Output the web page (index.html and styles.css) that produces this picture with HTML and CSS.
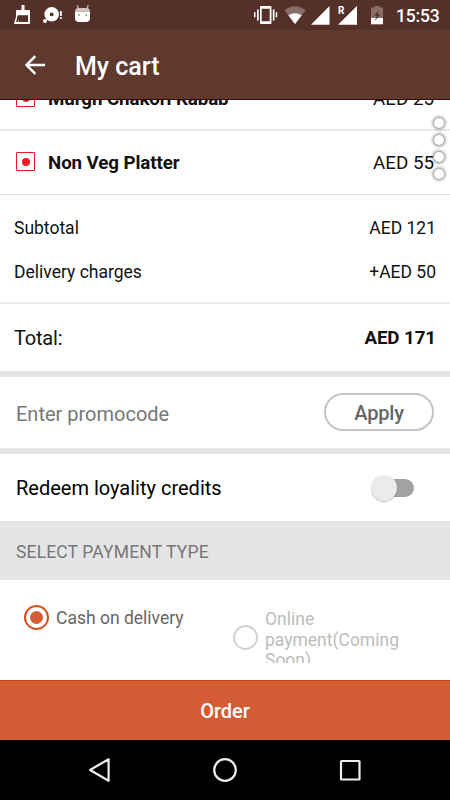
FILE: index.html
```html
<!DOCTYPE html>
<html lang="en">
<head>
<meta charset="utf-8">
<title>My cart</title>
<link rel="stylesheet" href="styles.css">
</head>
<body>
<div class="screen">
  <div class="status">
    <svg width="100" height="30" viewBox="0 0 100 30" fill="#fff">
      <path fill-rule="evenodd" d="M21.500 5h3v5h4.500a1 1 0 0 1 1 1v12a1 1 0 0 1-1 1H15.200a1 1 0 0 1-1-1.400L16 17v-6a1 1 0 0 1 1-1h4.500zM17.600 15.200 16.200 22h1.600l.7-2.200.3 2.200h9.300v-6.800z"/>
      <path fill-rule="evenodd" d="M51.700 7a7.300 7.300 0 1 1 0 14.600 7.300 7.300 0 0 1 0-14.600zm0 5.500a1.900 1.900 0 1 0 0 3.800 1.900 1.900 0 0 0 0-3.800z"/>
      <circle cx="45" cy="21" r="2"/>
      <path d="M60 11h1.800v5H60zM60 17.300h1.800v1.800H60z"/>
      <path d="M77.300 5.300l1 3M88.200 5.300l-1 3" stroke="#c5b8b4" stroke-width="1.300"/>
      <path d="M75 11.500h15v6.500q0 4-4 4h-7q-4 0-4-4z"/>
      <path d="M75 11.700q0-3.700 3.500-3.700h8q3.500 0 3.500 3.700z" fill="#cfc5c2"/>
      <circle cx="79" cy="15" r=".9" fill="#a08b85"/><circle cx="86.300" cy="15" r=".9" fill="#a08b85"/>
    </svg>
    <div class="status-right">
      <svg width="136" height="30" viewBox="250 0 136 30" fill="#fff">
        <path fill-rule="evenodd" d="M261 6h9.500a1 1 0 0 1 1 1v16a1 1 0 0 1-1 1H261a1 1 0 0 1-1-1V7a1 1 0 0 1 1-1zm.7 2.700v12.600h8V8.700z"/>
        <path d="M257 9.500h1.700v11H257zM254 12.300h1.500v5H254zM272.800 9.500h1.700v11h-1.700zM275.700 12.300h1.500v5h-1.500z"/>
        <path d="M284.500 10.300q10.500-8 21 0L295 24z" fill="#886e68"/>
        <path d="M288.300 15.300q6.700-4.300 13.400 0L295 24z"/>
        <path d="M329.500 6v18.700H311zM357 6v18.700h-19z"/>
        <path d="M374.500 6h5.500v1.500h3V18h-12V7.500h3.500z" fill="#886e68"/>
        <path d="M371 18h12v6.300h-12z"/>
        <path d="M378.500 10l-4.300 5.800h2.600l-2 5.200 5.500-6.800h-2.800l1-4.200z" fill="#553028"/>
      </svg>
      <span class="roam">R</span>
      <span class="clock">15:53</span>
    </div>
  </div>
  <header class="appbar">
    <svg class="back" width="20" height="20" viewBox="0 0 20 20" fill="none" stroke="#fff" stroke-width="2.400"><path d="M20 10H2M10.300 1.200 1.500 10l8.800 8.800"/></svg>
    <h1>My cart</h1>
  </header>
  <main>
    <div class="item first"><span class="mark"></span><b>Murgh Chakori Kabab</b><span class="price">AED 25</span></div>
    <div class="item"><span class="mark"></span><b>Non Veg Platter</b><span class="price">AED 55</span></div>
    <div class="sums">
      <div class="sum"><span>Subtotal</span><span>AED 121</span></div>
      <div class="sum"><span>Delivery charges</span><span>+AED 50</span></div>
    </div>
    <div class="total"><span>Total:</span><b>AED 171</b></div>
    <div class="promo"><span>Enter promocode</span><button>Apply</button></div>
    <div class="redeem"><span>Redeem loyality credits</span><span class="switch"><i></i></span></div>
    <h2>SELECT PAYMENT TYPE</h2>
    <div class="payments">
      <div class="option cash"><span class="radio on"></span><span class="label">Cash on delivery</span></div>
      <div class="option online"><span class="radio"></span><span>Online payment(Coming Soon)</span></div>
    </div>
    <div class="dots"><i></i><i></i><i></i><i></i></div>
  </main>
  <div class="order">Order</div>
  <nav>
    <svg width="24" height="26" viewBox="0 0 24 26"><path d="M20.600 2.200v21.600L2 13z"/></svg>
    <svg width="26" height="26" viewBox="0 0 26 26"><circle cx="13" cy="13" r="10.800"/></svg>
    <svg width="24" height="26" viewBox="0 0 24 26"><rect x="3" y="4" width="18.500" height="18.500" rx=".5"/></svg>
  </nav>
</div>
</body>
</html>
```
FILE: styles.css
```css
* { box-sizing: border-box; }
body { margin: 0; font-family: Roboto, "Liberation Sans", sans-serif; color: #111; background: #fff; }
.screen { width: 450px; height: 800px; display: flex; flex-direction: column; overflow: hidden; }
svg { display: block; flex: none; }
.status { height: 30px; flex: none; background: #553028; display: flex; justify-content: space-between; }
.status-right { position: relative; display: flex; align-items: center; padding-right: 10px; color: #fff; }
.roam { position: absolute; left: 88px; top: 6px; font-size: 10px; line-height: 10px; font-weight: 700; }
.clock { font-size: 17.5px; font-weight: 500; width: 44px; margin-left: 10px; line-height: 30px; padding-top: 2px; letter-spacing: -0.15px; white-space: nowrap; }
.appbar { height: 70px; flex: none; background: #5f382e; border-bottom: 1px solid #3b0805; display: flex; align-items: center; padding: 4px 0 0 25px; gap: 30px; color: #fff; }
.back { margin-top: -4px; }
h1 { margin: 0; font-size: 25px; font-weight: 500; line-height: 30px; }
main { flex: 1; min-height: 0; overflow: hidden; position: relative; display: flex; flex-direction: column; }
main > div, h2 { flex: none; }
.item { height: 64px; display: flex; align-items: center; padding: 0 16px; border-bottom: 1px solid #dedede; font-size: 18.75px; }
.item.first { height: 65px; margin-top: -34px; padding-top: 2px; border-bottom: 2px solid #ebebeb; }
.item b { font-weight: 700; margin-left: 13px; letter-spacing: -0.1px; }
.item .price { margin-left: auto; }
.mark { width: 19px; height: 19px; border: 1px solid #f01820; border-radius: 1px; display: grid; place-items: center; margin-top: -2px; }
.mark::after { content: ""; width: 8px; height: 8px; border-radius: 50%; background: #ed1c24; }
.sums { height: 109px; padding: 11px 14px 0; border-bottom: 2px solid #ebebeb; font-size: 17.5px; }
.sum { height: 44px; display: flex; align-items: center; justify-content: space-between; }
.total { height: 73px; border-bottom: 6px solid #e5e5e5; padding: 0 14px; display: flex; align-items: center; justify-content: space-between; font-size: 20px; }
.total > span { letter-spacing: -0.2px; }
.total b { font-size: 18.75px; letter-spacing: -0.1px; }
.promo { height: 77px; border-bottom: 6px solid #e5e5e5; display: flex; align-items: center; justify-content: space-between; padding: 0 16px; font-size: 20px; color: #777; }
.promo > span { padding-top: 2px; }
button { width: 110px; height: 38px; border: 2px solid #c4c4c4; border-radius: 19px; background: #fff; font: 500 20px Roboto, "Liberation Sans", sans-serif; letter-spacing: -0.2px; color: #666; padding: 2px 0 0; margin-top: -1px; }
.redeem { height: 67px; display: flex; align-items: center; justify-content: space-between; padding: 0 36px 0 16px; font-size: 20px; color: #000; }
.switch { width: 43px; height: 26px; display: flex; align-items: center; position: relative; }
.switch::before { content: ""; width: 35px; height: 18px; margin-left: 8px; border-radius: 9px; background: #a2a2a2; }
.switch i { position: absolute; left: 0; top: 0; width: 26px; height: 26px; border-radius: 50%; background: #ebebeb; box-shadow: 0 1px 1px rgba(0,0,0,.25); }
h2 { margin: 0; height: 59px; line-height: 62px; padding-left: 16px; background: #e5e5e5; font-size: 17.5px; font-weight: 400; letter-spacing: 0.15px; color: #777; }
.payments { height: 100px; display: flex; align-items: flex-start; font-size: 17.5px; line-height: 20.5px; color: #666; }
.option { display: flex; align-items: center; gap: 7px; }
.cash { margin: 25px 0 0 24px; width: 209px; }
.label { padding-top: 2px; }
.online { height: 55px; margin-top: 28px; width: 185px; overflow: hidden; color: #bcbcbc; align-items: flex-start; gap: 7px; }
.online > span:last-child { padding-top: 1px; }
.radio { width: 25px; height: 25px; flex: none; border: 2px solid #d2d2d2; border-radius: 50%; display: grid; place-items: center; }
.online .radio { margin-top: 17px; }
.radio.on { border-color: #d4521f; }
.radio.on::after { content: ""; width: 13px; height: 13px; border-radius: 50%; background: #d35c35; }
.dots { position: absolute; top: 18px; left: 434px; display: flex; flex-direction: column; gap: 7px; }
.dots i { width: 10px; height: 10px; border-radius: 50%; background: #fff; box-shadow: 0 0 3px 1.5px rgba(0,0,0,.42); }
.order { height: 60px; flex: none; border-top: 1px solid #cb4111; background: #d35c35; color: #fff; font-size: 20px; font-weight: 500; line-height: 61px; text-align: center; }
nav { height: 60px; flex: none; background: #000; display: flex; justify-content: center; align-items: center; gap: 100px; }
nav svg { fill: none; stroke: #eee; stroke-width: 2.200; stroke-linejoin: round; }
```
